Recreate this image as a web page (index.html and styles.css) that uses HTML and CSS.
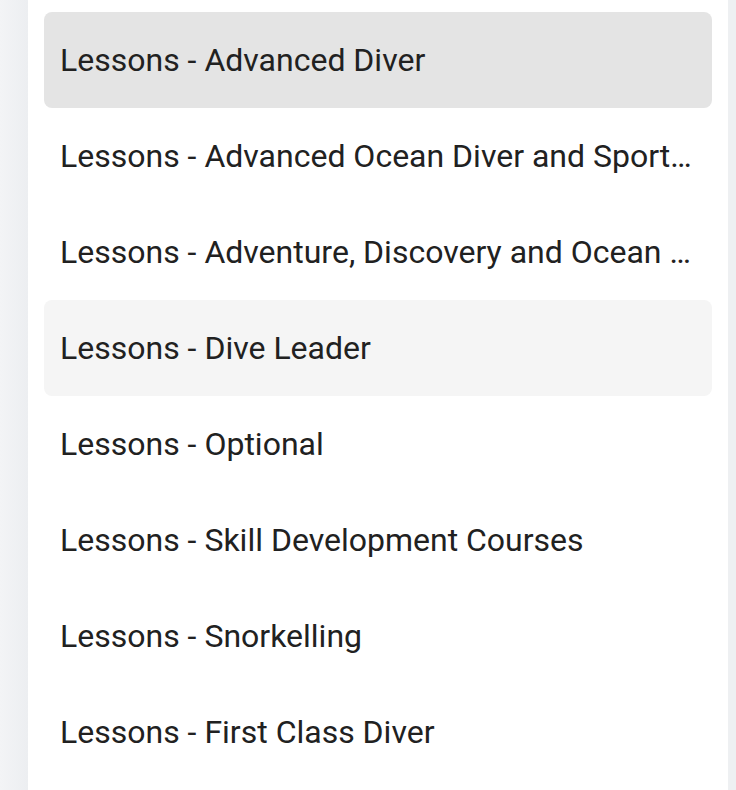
FILE: index.html
```html
<!DOCTYPE html>
<html lang="en">
<head>
<meta charset="utf-8">
<title>Lessons</title>
<link rel="stylesheet" href="styles.css">
</head>
<body>
<div class="layout">
  <div class="side-left"></div>
  <div class="panel">
    <ul class="list">
      <li class="item selected">Lessons - Advanced Diver</li>
      <li class="item">Lessons - Advanced Ocean Diver and Sports Diver</li>
      <li class="item">Lessons - Adventure, Discovery and Ocean Diver</li>
      <li class="item hover">Lessons - Dive Leader</li>
      <li class="item">Lessons - Optional</li>
      <li class="item">Lessons - Skill Development Courses</li>
      <li class="item">Lessons - Snorkelling</li>
      <li class="item">Lessons - First Class Diver</li>
    </ul>
  </div>
  <div class="side-right"></div>
</div>
</body>
</html>
```

FILE: styles.css
```css
html, body {
  margin: 0;
  padding: 0;
  height: 100%;
  overflow: hidden;
  background: #ffffff;
  font-family: Roboto, "Liberation Sans", sans-serif;
}
.layout {
  display: flex;
  height: 790px;
}
.side-left {
  width: 28px;
  flex: none;
  background: linear-gradient(to right, #f3f4f6, #eceef1);
}
.side-right {
  width: 8px;
  flex: none;
  background: #eef0f2;
}
.panel {
  flex: 1;
  background: #ffffff;
  padding: 12px 16px 0 16px;
  overflow: hidden;
}
.list {
  list-style: none;
  margin: 0;
  padding: 0;
}
.item {
  display: block;
  height: 96px;
  line-height: 96px;
  padding: 0 16px 0 16px;
  border-radius: 8px;
  font-size: 32px;
  color: #212121;
  white-space: nowrap;
  overflow: hidden;
  text-overflow: ellipsis;
}
.item.selected {
  background: #e4e4e4;
}
.item.hover {
  background: #f5f5f5;
}
```
